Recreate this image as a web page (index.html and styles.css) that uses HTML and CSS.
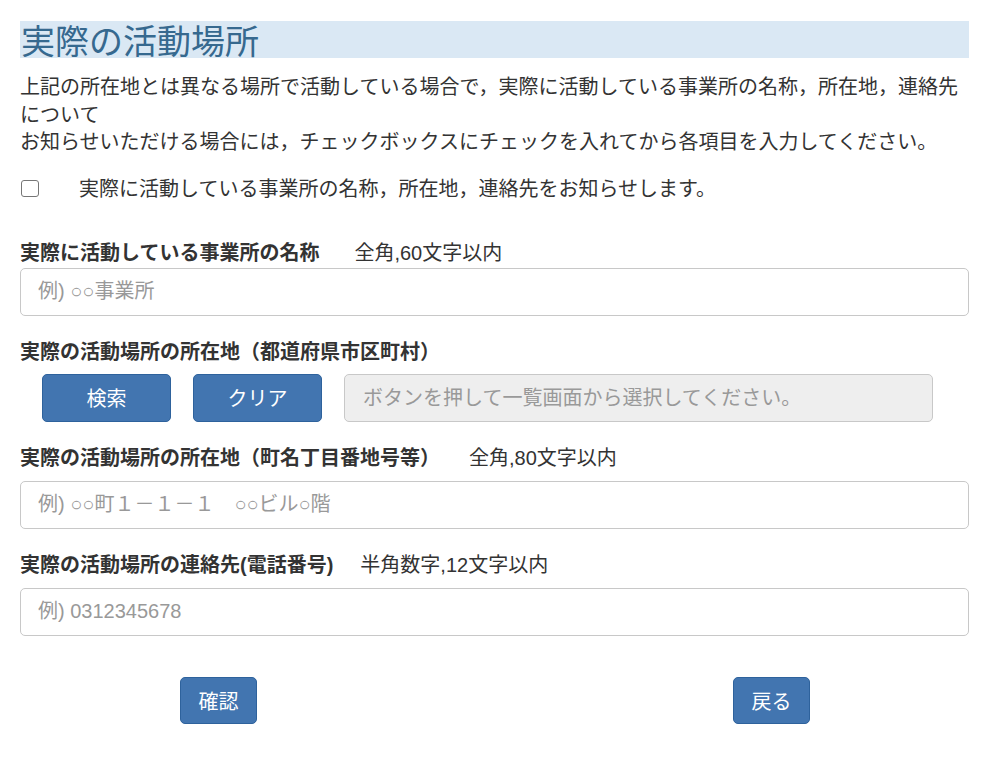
FILE: index.html
```html
<!DOCTYPE html>
<html lang="ja">
<head>
<meta charset="utf-8">
<title>実際の活動場所</title>
<link rel="stylesheet" href="styles.css">
</head>
<body>
<div class="page">
  <h2 class="section-title">実際の活動場所</h2>
  <p class="lead">上記の所在地とは異なる場所で活動している場合で，実際に活動している事業所の名称，所在地，連絡先について<br>お知らせいただける場合には，チェックボックスにチェックを入れてから各項目を入力してください。</p>
  <label class="check-row">
    <input type="checkbox" class="check">
    <span class="check-text">実際に活動している事業所の名称，所在地，連絡先をお知らせします。</span>
  </label>

  <div class="field field-first">
    <div class="label-row"><span class="label">実際に活動している事業所の名称</span><span class="hint hint-1">全角,60文字以内</span></div>
    <input class="text-input gap-0" type="text" placeholder="例) ○○事業所">
  </div>

  <div class="field">
    <div class="label-row"><span class="label">実際の活動場所の所在地（都道府県市区町村）</span></div>
    <div class="search-row">
      <button class="btn btn-wide" type="button">検索</button>
      <button class="btn btn-wide" type="button">クリア</button>
      <div class="readonly-box">ボタンを押して一覧画面から選択してください。</div>
    </div>
  </div>

  <div class="field">
    <div class="label-row"><span class="label">実際の活動場所の所在地（町名丁目番地号等）</span><span class="hint hint-3">全角,80文字以内</span></div>
    <input class="text-input" type="text" placeholder="例) ○○町１－１－１　○○ビル○階">
  </div>

  <div class="field">
    <div class="label-row"><span class="label">実際の活動場所の連絡先(電話番号)</span><span class="hint hint-4">半角数字,12文字以内</span></div>
    <input class="text-input" type="text" placeholder="例) 0312345678">
  </div>

  <div class="actions">
    <button class="btn btn-small" type="button">確認</button>
    <button class="btn btn-small" type="button">戻る</button>
  </div>
</div>
</body>
</html>
```

FILE: styles.css
```css
* { box-sizing: border-box; }
html, body { margin: 0; padding: 0; background: #fff; }
body {
  font-family: "Liberation Sans", "Noto Sans CJK JP", sans-serif;
  color: #333;
  font-size: 20px;
}
.page {
  width: 949px;
  margin-left: 20px;
  padding-top: 21px;
}
.section-title {
  margin: 0;
  line-height: 37px;
  font-size: 34px;
  font-weight: normal;
  color: #36698f;
  background: #dae8f4;
  padding-left: 1px;
  font-family: "Noto Sans CJK JP", sans-serif;
}
.lead {
  margin: 16px 0 0 0;
  line-height: 27.5px;
  font-size: 20px;
}
.check-row {
  display: flex;
  align-items: center;
  height: 28px;
  margin-top: 18px;
}
.check {
  appearance: none;
  -webkit-appearance: none;
  width: 18px;
  height: 17px;
  margin: 0 0 0 1px;
  border: 1px solid #767676;
  border-radius: 3px;
  background: #fff;
}
.check-text {
  margin-left: 40px;
  line-height: 28px;
}
.field { margin-top: 22px; }
.field-first { margin-top: 36px; }
.label-row {
  display: flex;
  line-height: 28px;
  height: 28px;
}
.label { font-weight: bold; }
.hint { font-weight: normal; }
.hint-1 { margin-left: 35px; }
.hint-3 { margin-left: 29px; }
.hint-4 { margin-left: 27px; }
.text-input {
  display: block;
  width: 100%;
  height: 48px;
  margin: 9px 0 0 0;
  padding: 0 17px;
  border: 1px solid #c8c8c8;
  border-radius: 5px;
  font-family: inherit;
  font-size: 20px;
  color: #555;
  background: #fff;
}
.text-input.gap-0 { margin-top: 1px; }
.text-input::placeholder { color: #999; }
.search-row {
  display: flex;
  gap: 22px;
  margin-top: 8px;
  padding-left: 22px;
  padding-right: 36px;
}
.btn {
  height: 48px;
  border: 1px solid #2e629c;
  border-radius: 5px;
  background: #4275b0;
  color: #fff;
  font-family: inherit;
  font-size: 20px;
  padding: 0;
}
.btn-wide { width: 129px; }
.btn-small { width: 77px; height: 47px; }
.readonly-box {
  flex: 1;
  height: 48px;
  line-height: 46px;
  padding: 0 18px;
  border: 1px solid #c8c8c8;
  border-radius: 5px;
  background: #eee;
  color: #999;
}
.actions {
  display: flex;
  justify-content: space-between;
  padding: 0 159px 0 160px;
  margin-top: 41px;
}
```
